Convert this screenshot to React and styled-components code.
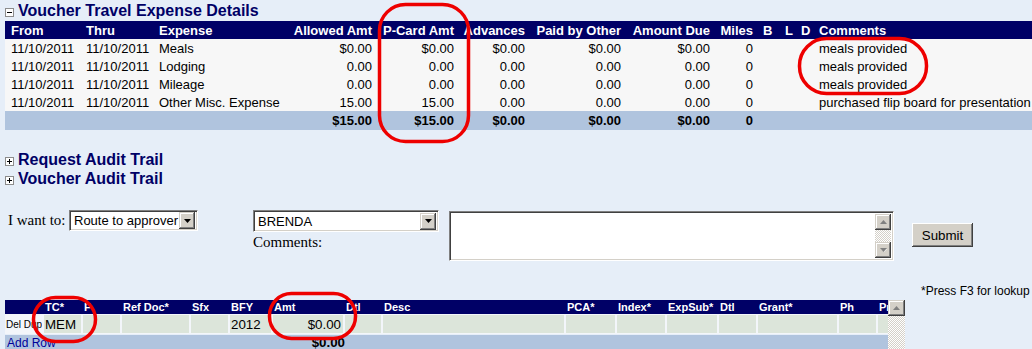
import React from 'react';
import styled, { createGlobalStyle } from 'styled-components';

const Global = createGlobalStyle`
  html, body { margin: 0; padding: 0; background: #e6eef8; overflow: hidden; }
  body { font-family: "Liberation Sans", Arial, sans-serif; color: #000; }
`;

const Page = styled.div`
  position: relative;
  width: 1032px;
  height: 349px;
  overflow: hidden;
  box-sizing: border-box;
  padding-left: 5px;
  display: flex;
  flex-direction: column;
`;

const SectionTitle = styled.div`
  display: flex;
  align-items: center;
  gap: 4px;
  height: ${p => p.$h || 19}px;
  margin-top: ${p => p.$mt || 0}px;
  font: bold 16px "Liberation Sans", Arial, sans-serif;
  color: #000066;
  white-space: nowrap;
`;

const ToggleIcon = ({ open }) => (
  <svg width="9" height="9" viewBox="0 0 9 9" style={{ flex: 'none', marginTop: 3 }}>
    <rect x="0.5" y="0.5" width="8" height="8" fill="#fff" stroke="#8c8c8c" />
    <line x1="2" y1="4.5" x2="7" y2="4.5" stroke="#000" />
    {!open && <line x1="4.5" y1="2" x2="4.5" y2="7" stroke="#000" />}
  </svg>
);

/* ---------- Top expense table ---------- */
const Table = styled.table`
  border-collapse: collapse;
  table-layout: fixed;
  width: 1027px;
  font-size: 13px;
`;
const Col = styled.col`
  width: ${p => p.$w}px;
`;
const Th = styled.th`
  background: #000066;
  color: #fff;
  font: bold 13px "Liberation Sans", Arial, sans-serif;
  height: 18px;
  padding: 0 ${p => (p.$right ? 4 : 0)}px 0 ${p => (p.$right ? 0 : 6)}px;
  text-align: ${p => (p.$right ? 'right' : 'left')};
  white-space: nowrap;
`;
const Tr = styled.tr`
  background: ${p => (p.$total ? '#b0c4de' : '#f7f7f7')};
  font-weight: ${p => (p.$total ? 'bold' : 'normal')};
`;
const Td = styled.td`
  height: ${p => (p.$total ? 19 : 18)}px;
  padding: 0 ${p => (p.$right ? 4 : 0)}px 0 ${p => (p.$right ? 0 : 6)}px;
  text-align: ${p => (p.$right ? 'right' : 'left')};
  white-space: nowrap;
  overflow: hidden;
`;

const columns = [
  { t: 'From', w: 75 },
  { t: 'Thru', w: 73 },
  { t: 'Expense', w: 134 },
  { t: 'Allowed Amt', w: 89, r: true },
  { t: 'P-Card Amt', w: 82, r: true },
  { t: 'Advances', w: 71, r: true },
  { t: 'Paid by Other', w: 96, r: true },
  { t: 'Amount Due', w: 89, r: true },
  { t: 'Miles', w: 43, r: true },
  { t: 'B', w: 22 },
  { t: 'L', w: 16 },
  { t: 'D', w: 18 },
  { t: 'Comments', w: 219 },
];

const rows = [
  ['11/10/2011', '11/10/2011', 'Meals', '$0.00', '$0.00', '$0.00', '$0.00', '$0.00', '0', '', '', '', 'meals provided'],
  ['11/10/2011', '11/10/2011', 'Lodging', '0.00', '0.00', '0.00', '0.00', '0.00', '0', '', '', '', 'meals provided'],
  ['11/10/2011', '11/10/2011', 'Mileage', '0.00', '0.00', '0.00', '0.00', '0.00', '0', '', '', '', 'meals provided'],
  ['11/10/2011', '11/10/2011', 'Other Misc. Expense', '15.00', '15.00', '0.00', '0.00', '0.00', '0', '', '', '', 'purchased flip board for presentation'],
];
const totals = ['', '', '', '$15.00', '$15.00', '$0.00', '$0.00', '$0.00', '0', '', '', '', ''];

/* ---------- Form ---------- */
const FormRow = styled.div`
  display: flex;
  align-items: flex-start;
  margin-top: 22px;
  margin-left: 3px;
  height: 51px;
`;
const FieldGroup = styled.div`
  display: flex;
  align-items: center;
`;
const SerifLabel = styled.span`
  font: 15px "Liberation Serif", "Times New Roman", serif;
  width: ${p => p.$w || 'auto'};
  white-space: nowrap;
  display: block;
  line-height: 17px;
`;
const Stack = styled.div`
  display: flex;
  flex-direction: column;
  gap: 2px;
  margin-left: ${p => p.$ml}px;
`;
const SelectBox = styled.div`
  width: ${p => p.$w}px;
  height: ${p => p.$h || 21}px;
  box-sizing: border-box;
  border: 1px solid;
  border-color: #808080 #ffffff #ffffff #808080;
  box-shadow: inset 1px 1px 0 #404040, inset -1px -1px 0 #d4d0c8;
  background: #fff;
  display: flex;
  align-items: center;
  padding: 2px;
  font: 13px "Liberation Sans", Arial, sans-serif;
`;
const SelectText = styled.span`
  flex: 1;
  padding-left: 2px;
  white-space: nowrap;
`;
const DropButton = styled.span`
  width: 16px;
  height: 17px;
  flex: none;
  box-sizing: border-box;
  background: #d4d0c8;
  box-shadow: inset -1px -1px 0 #404040, inset 1px 1px 0 #d4d0c8, inset -2px -2px 0 #808080, inset 2px 2px 0 #ffffff;
  display: flex;
  align-items: center;
  justify-content: center;
`;
const Arrow = ({ up, disabled }) => (
  <svg width="7" height="4" viewBox="0 0 7 4">
    {disabled && <polygon points={up ? '1,5 4,2 7,5' : '1,1 7,1 4,4'} fill="#fff" />}
    <polygon points={up ? '0,4 3.5,0 7,4' : '0,0 7,0 3.5,4'} fill={disabled ? '#808080' : '#000'} />
  </svg>
);

const TextArea = styled.div`
  margin-left: 10px;
  margin-top: 1px;
  width: 445px;
  height: 50px;
  box-sizing: border-box;
  border: 1px solid;
  border-color: #808080 #ffffff #ffffff #808080;
  box-shadow: inset 1px 1px 0 #404040, inset -1px -1px 0 #d4d0c8;
  background: #fff;
  display: flex;
  justify-content: flex-end;
  padding: 2px;
`;
const ScrollBar = styled.div`
  width: ${p => p.$w || 16}px;
  align-self: stretch;
  display: flex;
  flex-direction: column;
  justify-content: space-between;
  background: repeating-conic-gradient(#d4d0c8 0 25%, #ffffff 0 50%) 0 0 / 2px 2px;
  flex: none;
`;
const ScrollButton = styled.span`
  height: ${p => p.$h || 16}px;
  box-sizing: border-box;
  background: #d4d0c8;
  box-shadow: inset -1px -1px 0 #404040, inset 1px 1px 0 #d4d0c8, inset -2px -2px 0 #808080, inset 2px 2px 0 #ffffff;
  display: flex;
  align-items: center;
  justify-content: center;
`;

const Button = styled.button`
  margin-left: 18px;
  margin-top: 13px;
  width: 61px;
  height: 24px;
  padding: 0;
  background: #d4d0c8;
  border: none;
  box-shadow: inset -1px -1px 0 #404040, inset 1px 1px 0 #ffffff, inset -2px -2px 0 #808080, inset 2px 2px 0 #d4d0c8;
  font: 13.33px "Liberation Sans", Arial, sans-serif;
  color: #000;
`;

const Note = styled.div`
  margin-top: 23px;
  margin-left: 916px;
  height: 16px;
  font: 12px/14px "Liberation Sans", Arial, sans-serif;
  white-space: nowrap;
`;

/* ---------- Bottom accounting grid ---------- */
const GridWrap = styled.div`
  display: flex;
  height: 49px;
`;
const GridArea = styled.div`
  width: 883px;
  overflow: hidden;
  display: flex;
  flex-direction: column;
`;
const gridCols = '37px 37px 37px 67px 37px 41px 70px 36px 181px 49px 48px 50px 37px 79px 37px 40px';
const GridRow = styled.div`
  display: grid;
  grid-template-columns: ${gridCols};
  column-gap: 2px;
  width: 920px;
  background: ${p => p.$bg};
  padding: ${p => p.$pad || '0'};
  height: ${p => p.$h}px;
  align-items: ${p => (p.$stretch ? 'stretch' : 'center')};
`;
const GH = styled.span`
  color: #fff;
  font: bold 11px "Liberation Sans", Arial, sans-serif;
  padding-left: 1px;
  white-space: nowrap;
`;
const GCell = styled.span`
  background: ${p => (p.$plain ? 'transparent' : '#dce5da')};
  display: flex;
  align-items: center;
  justify-content: ${p => (p.$right ? 'flex-end' : 'flex-start')};
  padding: 0 ${p => (p.$right ? 2 : 0)}px 0 ${p => (p.$right ? 0 : 1)}px;
  font: ${p => (p.$small ? '10px' : '13.33px')} "Liberation Sans", Arial, sans-serif;
  white-space: nowrap;
  overflow: hidden;
`;
const TotalRow = styled.div`
  display: grid;
  grid-template-columns: 270px 70px;
  column-gap: 2px;
  background: #b0c4de;
  height: 14px;
  margin-top: 1px;
  align-items: start;
`;
const AddRow = styled.span`
  color: #000099;
  font: 12px "Liberation Sans", Arial, sans-serif;
  padding-left: 2px;
  line-height: 16px;
  white-space: nowrap;
`;
const TotalAmt = styled.span`
  font: bold 13.33px "Liberation Sans", Arial, sans-serif;
  text-align: right;
  padding-right: 2px;
  line-height: 15px;
`;

/* ---------- Annotation overlay ---------- */
const Overlay = styled.svg`
  position: absolute;
  left: 0;
  top: 0;
  pointer-events: none;
`;

const gridHeaders = ['', 'TC*', 'F', 'Ref Doc*', 'Sfx', 'BFY', 'Amt', 'Dtl', 'Desc', 'PCA*', 'Index*', 'ExpSub*', 'Dtl', 'Grant*', 'Ph', 'Pr'];

export default function App() {
  return (
    <>
      <Global />
      <Page>
        <SectionTitle $h={21}>
          <ToggleIcon open />
          <span>Voucher Travel Expense Details</span>
        </SectionTitle>
        <Table>
          <colgroup>
            {columns.map((c, i) => (
              <Col key={i} $w={c.w} />
            ))}
          </colgroup>
          <thead>
            <tr>
              {columns.map((c, i) => (
                <Th key={i} $right={c.r}>
                  {c.t}
                </Th>
              ))}
            </tr>
          </thead>
          <tbody>
            {rows.map((r, ri) => (
              <Tr key={ri}>
                {r.map((v, i) => (
                  <Td key={i} $right={columns[i].r}>
                    {v}
                  </Td>
                ))}
              </Tr>
            ))}
            <Tr $total>
              {totals.map((v, i) => (
                <Td key={i} $total $right={columns[i].r}>
                  {v}
                </Td>
              ))}
            </Tr>
          </tbody>
        </Table>

        <SectionTitle $mt={20}>
          <ToggleIcon />
          <span>Request Audit Trail</span>
        </SectionTitle>
        <SectionTitle>
          <ToggleIcon />
          <span>Voucher Audit Trail</span>
        </SectionTitle>

        <FormRow>
          <FieldGroup>
            <SerifLabel $w="61px">I want to:</SerifLabel>
            <SelectBox $w={129}>
              <SelectText>Route to approver</SelectText>
              <DropButton>
                <Arrow />
              </DropButton>
            </SelectBox>
          </FieldGroup>
          <Stack $ml={55}>
            <SelectBox $w={186} $h={22}>
              <SelectText>BRENDA</SelectText>
              <DropButton>
                <Arrow />
              </DropButton>
            </SelectBox>
            <SerifLabel>Comments:</SerifLabel>
          </Stack>
          <TextArea>
            <ScrollBar>
              <ScrollButton>
                <Arrow up disabled />
              </ScrollButton>
              <ScrollButton>
                <Arrow disabled />
              </ScrollButton>
            </ScrollBar>
          </TextArea>
          <Button>Submit</Button>
        </FormRow>

        <Note>*Press F3 for lookup</Note>

        <GridWrap>
          <GridArea>
            <GridRow $bg="#000066" $h={16}>
              {gridHeaders.map((h, i) => (
                <GH key={i}>{h}</GH>
              ))}
            </GridRow>
            <GridRow $bg="#f3f6fa" $h={20} $pad="1px 0" $stretch>
              <GCell $plain $small>Del Dup</GCell>
              <GCell>MEM</GCell>
              <GCell />
              <GCell />
              <GCell />
              <GCell>2012</GCell>
              <GCell $right>$0.00</GCell>
              <GCell />
              <GCell />
              <GCell />
              <GCell />
              <GCell />
              <GCell />
              <GCell />
              <GCell />
              <GCell />
            </GridRow>
            <TotalRow>
              <AddRow>Add Row</AddRow>
              <TotalAmt>$0.00</TotalAmt>
            </TotalRow>
          </GridArea>
          <ScrollBar $w={17}>
            <ScrollButton $h={16}>
              <Arrow up disabled />
            </ScrollButton>
          </ScrollBar>
        </GridWrap>

        <Overlay width="1032" height="349" viewBox="0 0 1032 349">
          <g fill="none" stroke="#ee0000" strokeWidth="3.5">
            <rect x="379.5" y="4.5" width="89" height="137" rx="26" />
            <rect x="799.5" y="38.5" width="127" height="55" rx="27" />
            <rect x="33.5" y="297.5" width="62" height="44" rx="22" />
            <rect x="269.5" y="293.5" width="86" height="45" rx="22" />
          </g>
        </Overlay>
      </Page>
    </>
  );
}
